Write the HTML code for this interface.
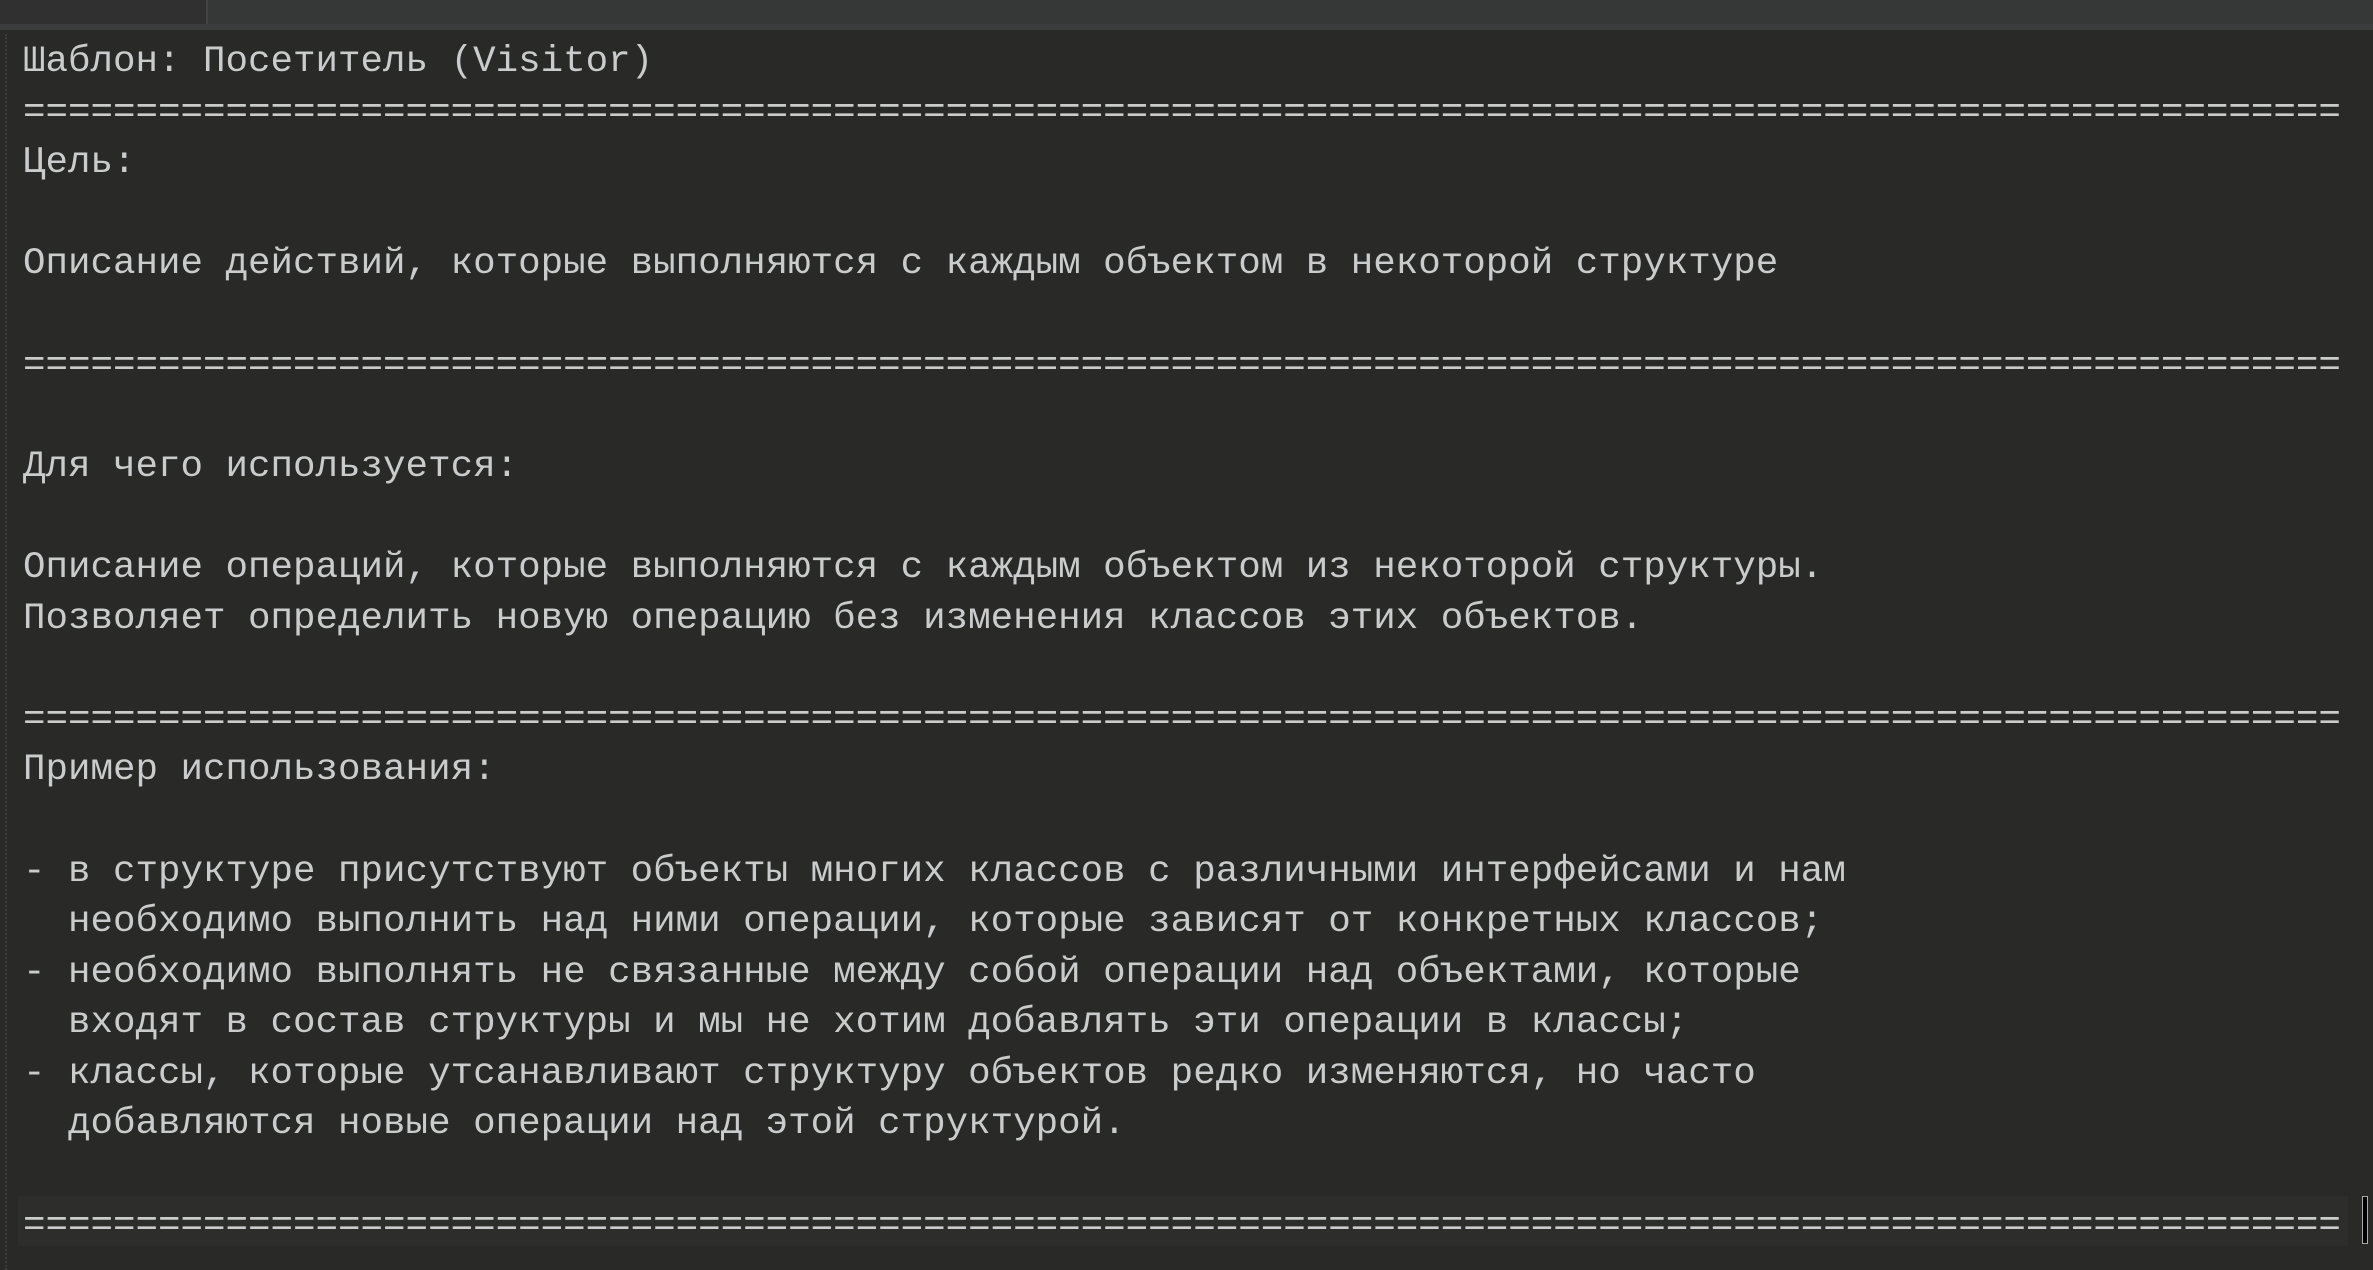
<!DOCTYPE html>
<html><head><meta charset="utf-8">
<style>
html,body{margin:0;padding:0;width:2373px;height:1270px;overflow:hidden;background:#292927;}
.top{position:absolute;left:0;top:0;width:2373px;height:27px;background:#2f302f;}
.tab{position:absolute;left:206px;top:0;width:2167px;height:24px;background:#363837;border-left:2px solid #444;}
.sep{position:absolute;left:0;top:24px;width:2373px;height:6px;background:#3b3d3c;}
.gut{position:absolute;left:5px;top:34px;height:1236px;border-left:2px dotted #3c3c3a;}
.hl{position:absolute;left:18px;top:1196px;width:2330px;height:50px;background:#2d2d2b;}
pre{position:absolute;left:23px;top:37px;margin:0;font-family:"Liberation Mono",monospace;font-size:37.5px;line-height:50.6px;color:#c9cbcc;white-space:pre;}
.cur{position:absolute;left:2362px;top:1196px;width:4px;height:46px;background:#000;border:1px solid #aaa;}
</style></head><body>
<div class="top"><div class="tab"></div></div><div class="sep"></div>
<div class="gut"></div>
<div class="hl"></div>
<pre>Шаблон: Посетитель (Visitor)
=======================================================================================================
Цель:

Описание действий, которые выполняются с каждым объектом в некоторой структуре

=======================================================================================================

Для чего используется:

Описание операций, которые выполняются с каждым объектом из некоторой структуры.
Позволяет определить новую операцию без изменения классов этих объектов.

=======================================================================================================
Пример использования:

- в структуре присутствуют объекты многих классов с различными интерфейсами и нам
  необходимо выполнить над ними операции, которые зависят от конкретных классов;
- необходимо выполнять не связанные между собой операции над объектами, которые
  входят в состав структуры и мы не хотим добавлять эти операции в классы;
- классы, которые утсанавливают структуру объектов редко изменяются, но часто
  добавляются новые операции над этой структурой.

=======================================================================================================</pre>
<div class="cur"></div>
</body></html>
